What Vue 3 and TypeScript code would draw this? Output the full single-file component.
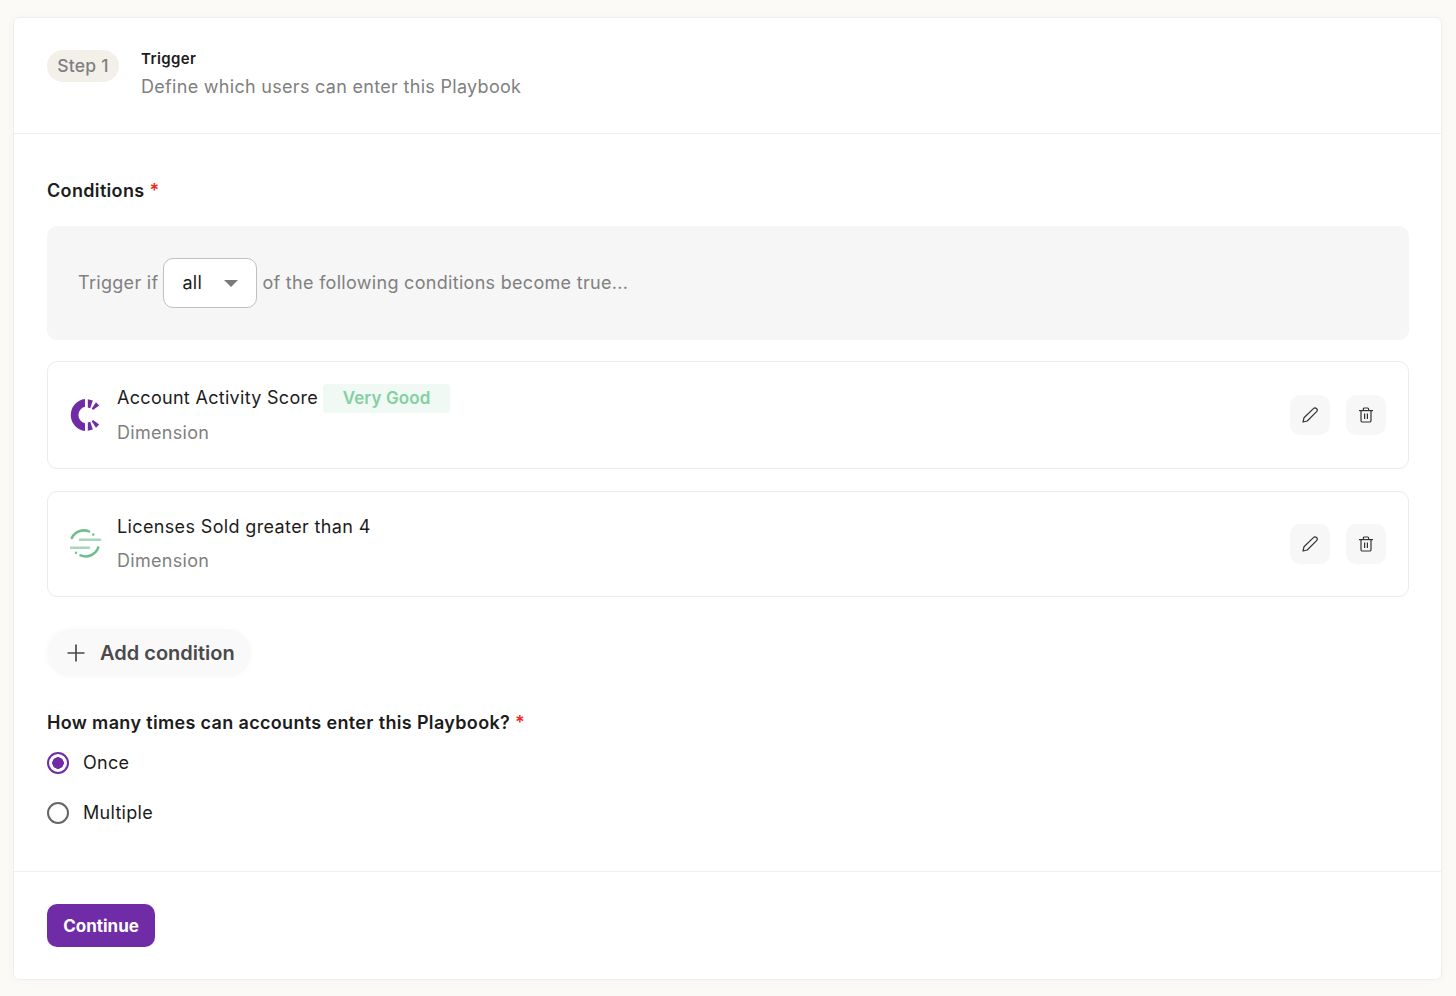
<script setup lang="ts">
interface Condition { title: string; badge?: string; kind: 'score' | 'sf' }
const conditions: Condition[] = [
  { title: 'Account Activity Score', badge: 'Very Good', kind: 'score' },
  { title: 'Licenses Sold greater than 4', kind: 'sf' },
]
</script>

<template>
  <div class="page">
    <main class="card">
      <header class="head">
        <span class="step">Step 1</span>
        <div class="head-text">
          <div class="head-title">Trigger</div>
          <div class="head-sub">Define which users can enter this Playbook</div>
        </div>
      </header>

      <section class="body">
        <h2 class="label conditions-label">Conditions <span class="req">*</span></h2>
        <div class="trigger-box">
          <span class="trigger-text">Trigger if</span>
          <div class="select">
            <span class="trigger-text">all</span>
            <svg width="14" height="7" viewBox="0 0 14 7"><path d="M0 0h14L7 7z" fill="#7a7a7a" /></svg>
          </div>
          <span class="trigger-text">of the following conditions become true...</span>
        </div>

        <div
          v-for="c in conditions"
          :key="c.title"
          class="cond"
          :class="c.kind"
        >
          <svg v-if="c.kind === 'score'" class="logo" width="32" height="34" viewBox="0 0 32 34">
            <path d="M15 1.1 A16 16 0 0 0 15 32.9 L15 25.2 A8.4 8.4 0 0 1 15 8.8 Z" fill="#702ca6" />
            <path d="M17.8 1.2 L22.8 2.6 L20.2 10.2 L17.8 9.6 Z" fill="#702ca6" />
            <path d="M26 4.2 L29.2 7.6 L23 12 L21.8 10.6 Z" fill="#702ca6" />
            <path d="M17.8 32.8 L22.8 31.4 L20.2 23.8 L17.8 24.4 Z" fill="#702ca6" />
            <path d="M26 29.8 L29.2 26.4 L23 22 L21.8 23.4 Z" fill="#702ca6" />
          </svg>
          <svg v-else class="logo" width="32" height="32" viewBox="0 0 32 32" fill="none" stroke-linecap="round">
            <path d="M1.8 10 A13.5 13.5 0 0 1 19 3.4" stroke="#6fbf8d" stroke-width="2.6" />
            <path d="M28.3 19.4 A13.5 13.5 0 0 1 10.5 27.4" stroke="#6fbf8d" stroke-width="2.6" />
            <path d="M10 11.8H30" stroke="#a5d8b8" stroke-width="2.6" />
            <path d="M1 19.8H19" stroke="#a5d8b8" stroke-width="2.6" />
            <circle cx="23.3" cy="6.5" r="1.2" fill="#6fbf8d" />
            <circle cx="6" cy="24.8" r="1.2" fill="#6fbf8d" />
          </svg>
          <div class="cond-text">
            <div class="cond-title">
              <span>{{ c.title }}</span>
              <span v-if="c.badge" class="badge">{{ c.badge }}</span>
            </div>
            <div class="cond-sub">Dimension</div>
          </div>
          <div class="actions">
            <button class="icon-btn" type="button" aria-label="Edit">
              <svg width="16" height="16" viewBox="0 0 16 16" fill="none" stroke="#333" stroke-width="1.2" stroke-linejoin="round">
                <path d="M1 15 L2 10.8 L11.4 1.6 A1.9 1.9 0 0 1 14.6 4.6 L5.2 14 Z" />
              </svg>
            </button>
            <button class="icon-btn" type="button" aria-label="Delete">
              <svg width="16" height="16" viewBox="0 0 16 16" fill="none" stroke="#333" stroke-width="1.2">
                <path d="M1 3.6H15" />
                <path d="M5.4 3.6V2A1 1 0 0 1 6.4 1H9.6A1 1 0 0 1 10.6 2V3.6" />
                <path d="M3 3.8V13.6A1.4 1.4 0 0 0 4.4 15H11.6A1.4 1.4 0 0 0 13 13.6V3.8" />
                <path d="M6.6 6.4V12M9.4 6.4V12" />
              </svg>
            </button>
          </div>
        </div>

        <button class="add" type="button">
          <svg width="18" height="18" viewBox="0 0 18 18" fill="none" stroke="#4a4a4a" stroke-width="1.7">
            <path d="M9 .5V17.5M.5 9H17.5" />
          </svg>
          <span>Add condition</span>
        </button>

        <h2 class="label times-label">How many times can accounts enter this Playbook? <span class="req">*</span></h2>
        <label class="radio-row">
          <span class="radio on"></span>
          <span>Once</span>
        </label>
        <label class="radio-row">
          <span class="radio"></span>
          <span>Multiple</span>
        </label>
      </section>

      <footer class="foot">
        <button class="continue" type="button">Continue</button>
      </footer>
    </main>
  </div>
</template>

<style>
html, body { margin: 0; background: #fbfaf7; }
</style>

<style scoped>
.page {
  height: 996px;
  box-sizing: border-box;
  padding: 17px 14px 16px 13px;
  font-family: Inter, "Noto Sans", sans-serif;
  color: #1c1c1c;
  letter-spacing: 0.3px;
}
.card {
  height: 963px;
  box-sizing: border-box;
  background: #fff;
  border: 1px solid #efefef;
  border-radius: 6px;
  display: flex;
  flex-direction: column;
  box-shadow: 0 0 8px rgba(120, 110, 80, 0.04);
}
.head {
  height: 116px;
  box-sizing: border-box;
  border-bottom: 1px solid #efefef;
  padding: 32px 32px 0 33px;
  display: flex;
  align-items: flex-start;
  gap: 22px;
}
.step {
  width: 72px;
  height: 32px;
  border-radius: 16px;
  background: #f3f0ea;
  color: #808080;
  font-size: 17.5px;
  font-weight: 500;
  letter-spacing: 0.2px;
  line-height: 32px;
  text-align: center;
}
.head-text { margin-top: -1px; }
.head-title { font-size: 15px; font-weight: 600; line-height: 20px; letter-spacing: 0.4px; }
.head-sub { font-size: 18px; line-height: 24px; color: #808080; margin-top: 6px; }
.body { flex: 1; padding: 0 32px 0 33px; }
.label { margin: 0; font-size: 18px; font-weight: 600; line-height: 24px; color: #1c1c1c; letter-spacing: 0.34px; }
.conditions-label { margin-top: 45px; }
.req { color: #f0281e; }
.trigger-box {
  margin-top: 23px;
  height: 114px;
  border-radius: 10px;
  background: #f6f6f6;
  display: flex;
  align-items: center;
  gap: 5px;
  padding-left: 31px;
  font-size: 18px;
  color: #808080;
}
.trigger-text { padding-bottom: 2px; }
.select {
  width: 94px;
  height: 50px;
  box-sizing: border-box;
  border: 1px solid #c0c0c0;
  border-radius: 10px;
  background: #fff;
  color: #1c1c1c;
  display: flex;
  align-items: center;
  justify-content: space-between;
  padding: 0 18px;
}
.cond {
  margin-top: 21px;
  box-sizing: border-box;
  border: 1px solid #ececec;
  border-radius: 10px;
  display: flex;
  align-items: center;
  padding: 0 22px 0 22px;
  gap: 15px;
}
.cond.score { height: 108px; }
.cond.sf { height: 106px; margin-top: 22px; }
.logo { flex: none; }
.cond-text { flex: 1; font-size: 18px; padding-bottom: 2px; }
.cond-title { display: flex; align-items: center; gap: 5px; line-height: 30px; color: #1c1c1c; }
.cond-sub { color: #808080; line-height: 24px; margin-top: 8px; }
.cond.sf .cond-text { padding-bottom: 3px; }
.cond.sf .cond-sub { margin-top: 7px; }
.cond.sf .cond-title { letter-spacing: 0.36px; }
.badge {
  width: 127px;
  height: 29px;
  border-radius: 4px;
  background: #f0f9f3;
  color: #86cfa2;
  font-size: 17px;
  font-weight: 600;
  letter-spacing: 0.1px;
  line-height: 29px;
  text-align: center;
}
.actions { display: flex; gap: 16px; }
.icon-btn {
  width: 40px;
  height: 40px;
  border: 0;
  border-radius: 10px;
  background: #f7f7f7;
  padding: 0;
  display: flex;
  align-items: center;
  justify-content: center;
}
.add {
  margin-top: 32px;
  width: 204px;
  height: 48px;
  border: 0;
  border-radius: 24px;
  background: #f9f9f9;
  box-shadow: 0 0 6px 1px rgba(0, 0, 0, 0.02);
  display: flex;
  align-items: center;
  gap: 15px;
  padding: 0 0 0 20px;
  font: 600 20px Inter, "Noto Sans", sans-serif;
  color: #4a4a4a;
}
.times-label { margin-top: 34px; }
.radio-row {
  display: flex;
  align-items: center;
  gap: 14.5px;
  height: 24px;
  font-size: 18px;
  color: #1c1c1c;
  margin-top: 15px;
}
.radio-row + .radio-row { margin-top: 26px; }
.radio {
  width: 22px;
  height: 22px;
  box-sizing: border-box;
  border: 2px solid #666;
  border-radius: 50%;
  background: #fff;
  margin: 1px 0 0 -0.5px;
}
.radio.on {
  border-color: #702ca6;
  background: radial-gradient(circle, #702ca6 0 5.5px, #fff 6px);
}
.foot {
  height: 108px;
  box-sizing: border-box;
  border-top: 1px solid #efefef;
  padding: 32px 0 0 33px;
}
.continue {
  width: 108px;
  height: 43px;
  border: 0;
  border-radius: 10px;
  background: #702ca6;
  color: #fff;
  font: 700 17px Inter, "Noto Sans", sans-serif;
  padding: 0;
}
</style>
